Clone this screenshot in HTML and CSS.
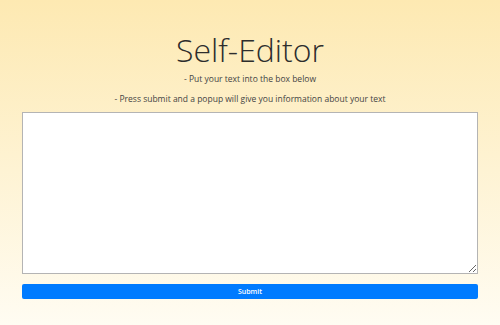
FILE: index.html
```html
<!DOCTYPE html>
<html lang="en">
<head>
  <meta charset="UTF-8" />
  <meta name="viewport" content="width=device-width, initial-scale=1.0" />
  <title>Self-Editor</title>
  <link rel="stylesheet" href="styles.css">
</head>
<body>

  <h1>Self-Editor</h1>
  <p>- Put your text into the box below</p>
  <p>- Press submit and a popup will give you information about your text</p>

  <!-- Editor Section -->
  <form class="editor">
    <textarea id="userText"></textarea>
    <button type="button">Submit</button>
  </form>

</body>
</html>
```

FILE: styles.css
```css
* {
  margin: 0;
  padding: 0;
  box-sizing: border-box;
}

html {
  height: 100%;
}

body {
  min-height: 100%;
  background: linear-gradient(to bottom, #fde9b2, #fffcf2);
  font-family: "Open Sans", sans-serif;
  color: #333;
  text-align: center;
  padding: 30px 22px 0;
}

h1 {
  font-family: "Open Sans", sans-serif;
  font-weight: 300;
  font-size: 32px;
  line-height: 40px;
  color: #2d2d2d;
  margin-bottom: 3px;
}

p {
  font-size: 8.5px;
  line-height: 12px;
  color: #444;
  margin-bottom: 8px;
}

.editor {
  display: flex;
  flex-direction: column;
  gap: 10px;
  margin-top: -1px;
}

.editor textarea {
  width: 100%;
  height: 162px;
  border: 1px solid #b4b4b4;
  background: white;
  resize: vertical;
}

.editor button {
  width: 100%;
  height: 15px;
  background-color: #007bff;
  color: white;
  border: none;
  border-radius: 2px;
  font-family: "Open Sans", sans-serif;
  font-size: 7px;
  font-weight: 600;
  cursor: pointer;
}
```
